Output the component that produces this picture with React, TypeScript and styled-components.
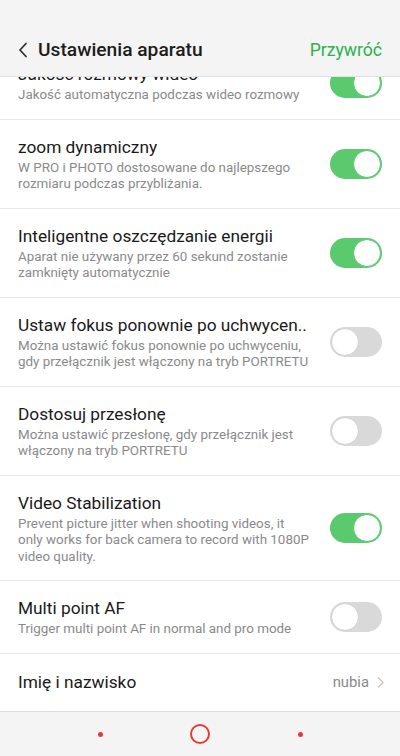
import { useLayoutEffect, useRef } from "react";
import styled, { createGlobalStyle } from "styled-components";

interface SettingItem {
    title: string;
    desc?: string;
    on: boolean;
}

const settings: SettingItem[] = [
    { title: "Jakość rozmowy wideo", desc: "Jakość automatyczna podczas wideo rozmowy", on: true },
    { title: "zoom dynamiczny", desc: "W PRO i PHOTO dostosowane do najlepszego rozmiaru podczas przybliżania.", on: true },
    { title: "Inteligentne oszczędzanie energii", desc: "Aparat nie używany przez 60 sekund zostanie zamknięty automatycznie", on: true },
    { title: "Ustaw fokus ponownie po uchwycen..", desc: "Można ustawić fokus ponownie po uchwyceniu, gdy przełącznik jest włączony na tryb PORTRETU", on: false },
    { title: "Dostosuj przesłonę", desc: "Można ustawić przesłonę, gdy przełącznik jest włączony na tryb PORTRETU", on: false },
    { title: "Video Stabilization", desc: "Prevent picture jitter when shooting videos, it only works for back camera to record with 1080P video quality.", on: true },
    { title: "Multi point AF", desc: "Trigger multi point AF in normal and pro mode", on: false },
];

export default function App() {
    const listRef = useRef<HTMLDivElement>(null);

    // the list is scrolled a bit, first row sits under the header
    useLayoutEffect(() => {
        if (listRef.current) listRef.current.scrollTop = 30;
    }, []);

    return (
        <Page>
            <GlobalStyle />
            <Header>
                <BackButton>
                    <svg width="10" height="16" viewBox="0 0 10 16">
                        <path d="M8 1.5 L2 8 L8 14.5" fill="none" stroke="#333" strokeWidth="1.8" strokeLinecap="round" strokeLinejoin="round" />
                    </svg>
                </BackButton>
                <HeaderTitle>Ustawienia aparatu</HeaderTitle>
                <ResetButton>Przywróć</ResetButton>
            </Header>

            <List ref={listRef}>
                {settings.map((item) => (
                    <Row key={item.title}>
                        <TextCol>
                            <Title>{item.title}</Title>
                            {item.desc && <Desc>{item.desc}</Desc>}
                        </TextCol>
                        <Switch $on={item.on} />
                    </Row>
                ))}
                <LinkRow>
                    <Title>Imię i nazwisko</Title>
                    <Value>
                        nubia
                        <svg width="7" height="13" viewBox="0 0 7 13">
                            <path d="M1 1.5 L6 6.5 L1 11.5" fill="none" stroke="#c4c4c4" strokeWidth="1.3" />
                        </svg>
                    </Value>
                </LinkRow>
            </List>

            <NavBar>
                <Dot />
                <HomeRing />
                <Dot />
            </NavBar>
        </Page>
    );
}

const GlobalStyle = createGlobalStyle`
    body {
        margin: 0;
        font-family: Roboto, "Noto Sans", sans-serif;
        background: #fff;
    }
`
const Page = styled.div`
    width: 400px;
    height: 756px;
    display: flex;
    flex-direction: column;
    background: #fff;
    overflow: hidden;
`
const Header = styled.div`
    height: 77px;
    flex-shrink: 0;
    background: #f4f4f4;
    border-bottom: 1px solid #e2e2e2;
    box-sizing: border-box;
    display: flex;
    align-items: flex-end;
    padding: 0 18px 13px 18px;
`
const BackButton = styled.div`
    width: 20px;
    height: 26px;
    display: flex;
    align-items: center;
`
const HeaderTitle = styled.h1`
    flex: 1;
    margin: 0;
    font-size: 19.2px;
    font-weight: 500;
    color: #1c1c1c;
    line-height: 26px;
`
const ResetButton = styled.span`
    font-size: 17.6px;
    color: #2bb24c;
    line-height: 26px;
`
const List = styled.div`
    flex: 1;
    overflow-y: auto;
    scrollbar-width: none;
    &::-webkit-scrollbar {
        display: none;
    }
`
const Row = styled.div`
    display: flex;
    align-items: center;
    gap: 14px;
    padding: 16px 18px 15px 18px;
    border-bottom: 1px solid #e9e9e9;
`
const TextCol = styled.div`
    flex: 1;
    min-width: 0;
`
const Title = styled.div`
    font-size: 17.3px;
    line-height: 22px;
    color: #1a1a1a;
    white-space: nowrap;
`
const Desc = styled.div`
    margin-top: 2px;
    font-size: 13.4px;
    line-height: 16.5px;
    color: #8a8a8a;
    padding-right: 6px;
`
const Switch = styled.div<{ $on: boolean }>`
    position: relative;
    width: 52px;
    height: 30px;
    flex-shrink: 0;
    border-radius: 15px;
    background: ${(p) => (p.$on ? "#5bc96d" : "#d9d9d9")};
    &::after {
        content: "";
        position: absolute;
        top: 1px;
        left: ${(p) => (p.$on ? "23px" : "1px")};
        width: 28px;
        height: 28px;
        box-sizing: border-box;
        border-radius: 50%;
        background: #fff;
        border: 1.5px solid ${(p) => (p.$on ? "#5bc96d" : "#cfcfcf")};
    }
`
const LinkRow = styled.div`
    height: 57px;
    display: flex;
    align-items: center;
    justify-content: space-between;
    padding: 0 16px 0 18px;
`
const Value = styled.div`
    display: flex;
    align-items: center;
    gap: 8px;
    font-size: 14.8px;
    color: #8a8a8a;
`
const NavBar = styled.div`
    height: 45px;
    flex-shrink: 0;
    background: #f4f4f4;
    border-top: 1px solid #dcdcdc;
    box-sizing: border-box;
    display: flex;
    align-items: center;
    justify-content: space-between;
    padding: 0 97.5px;
`
const Dot = styled.div`
    width: 5px;
    height: 5px;
    border-radius: 50%;
    background: #e53a3a;
`
const HomeRing = styled.div`
    width: 20px;
    height: 20px;
    box-sizing: border-box;
    border-radius: 50%;
    border: 2px solid #e53a3a;
`
